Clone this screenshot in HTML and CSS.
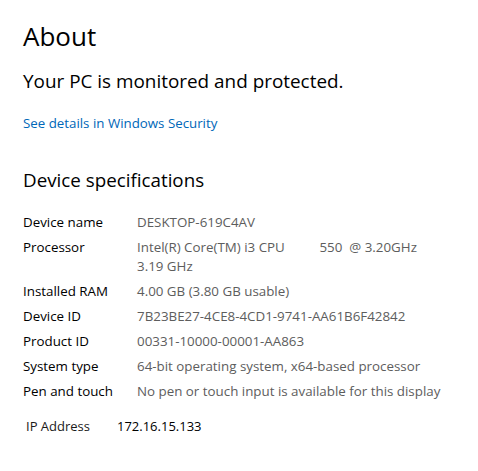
FILE: index.html
```html
<!DOCTYPE html>
<html>
<head>
<meta charset="utf-8">
<link rel="stylesheet" href="styles.css">
</head>
<body>
<main class="page">
  <h1 class="title">About</h1>
  <p class="status">Your PC is monitored and protected.</p>
  <a class="link" href="#">See details in Windows Security</a>
  <h2 class="section">Device specifications</h2>
  <div class="specs">
    <div class="label">Device name</div><div class="value">DESKTOP-619C4AV</div>
    <div class="label">Processor</div><div class="value">Intel(R) Core(TM) i3 CPU&nbsp;&nbsp;&nbsp;&nbsp;&nbsp;&nbsp;&nbsp;&nbsp;&nbsp;&nbsp;550&nbsp; @ 3.20GHz<br>3.19 GHz</div>
    <div class="label">Installed RAM</div><div class="value">4.00 GB (3.80 GB usable)</div>
    <div class="label">Device ID</div><div class="value">7B23BE27-4CE8-4CD1-9741-AA61B6F42842</div>
    <div class="label">Product ID</div><div class="value">00331-10000-00001-AA863</div>
    <div class="label">System type</div><div class="value">64-bit operating system, x64-based processor</div>
    <div class="label">Pen and touch</div><div class="value">No pen or touch input is available for this display</div>
  </div>
  <div class="ip">
    <span class="ip-label">IP Address</span>
    <span class="ip-value">172.16.15.133</span>
  </div>
</main>
</body>
</html>
```
FILE: styles.css
```css
html, body {
  margin: 0;
  padding: 0;
  background: #ffffff;
}
.page {
  font-family: "Open Sans", "Noto Sans", sans-serif;
  color: #000;
  padding: 18px 0 0 23px;
  display: flex;
  flex-direction: column;
  align-items: flex-start;
}
.title {
  margin: 0;
  font-weight: 400;
  font-size: 26px;
  line-height: 36px;
}
.status {
  margin: 14px 0 0 0;
  font-size: 18.9px;
  line-height: 26px;
}
.link {
  margin-top: 20px;
  font-size: 13.3px;
  line-height: 18px;
  color: #0067b8;
  text-decoration: none;
}
.section {
  margin: 35px 0 0 0;
  font-weight: 400;
  font-size: 18.8px;
  line-height: 26px;
}
.specs {
  margin-top: 20px;
  display: grid;
  grid-template-columns: 114px auto;
  row-gap: 6px;
  font-size: 13.35px;
  line-height: 19px;
}
.label { color: #000; }
.value { color: #5d5d5d; }
.ip {
  margin: 16px 0 0 3px;
  display: flex;
  gap: 27px;
  font-size: 13px;
  line-height: 19px;
}
.ip-label { color: #1a1a1a; }
.ip-value { color: #000; }
```
